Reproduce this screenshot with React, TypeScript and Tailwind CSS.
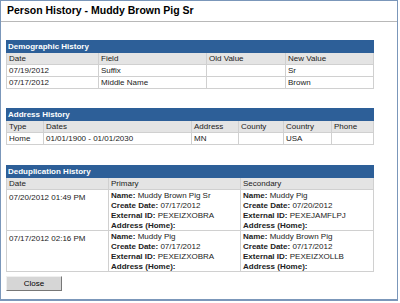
import React from 'react'

const cell = 'border border-[#d0d0d0] px-[2px] h-[12px] align-top leading-[11px]'
const head = 'border border-[#d0d0d0] px-[2px] h-[12px] bg-[#e4e4e4] text-left font-normal leading-[11px]'

function Section({ title, cols, children }: { title: string; cols: { label: string; w: number }[]; children: React.ReactNode }) {
  return (
    <table className="w-[367px] border-collapse table-fixed">
      <colgroup>
        {cols.map((c) => (
          <col key={c.label} style={{ width: c.w }} />
        ))}
      </colgroup>
      <thead>
        <tr>
          <th colSpan={cols.length} className="bg-[#2d5f98] text-white font-bold text-left px-[1px] h-[11px] leading-[11px] border border-[#2d5f98]">
            {title}
          </th>
        </tr>
        <tr>
          {cols.map((c) => (
            <th key={c.label} className={head}>
              {c.label}
            </th>
          ))}
        </tr>
      </thead>
      <tbody>{children}</tbody>
    </table>
  )
}

function Person({ name, created, ext }: { name: string; created: string; ext: string }) {
  return (
    <div className="leading-[10px] pt-[1px]">
      <div>
        <b>Name:</b> {name}
      </div>
      <div>
        <b>Create Date:</b> {created}
      </div>
      <div>
        <b>External ID:</b> {ext}
      </div>
      <div className="h-[9px]">
        <b>Address (Home):</b>
      </div>
    </div>
  )
}

export default function App() {
  return (
    <div className="w-[400px] h-[303px] bg-white text-[#222] text-[8px]" style={{ fontFamily: '"Liberation Sans", Arial, sans-serif' }}>
      <div className="w-[398px] h-[301px] border border-[#7b97ba] border-b-2 flex flex-col">
        <div className="h-[21px] border-b border-[#b8b8b8] px-[6px] flex items-center text-[10.5px] font-bold text-black">
          Person History - Muddy Brown Pig Sr
        </div>
        <div className="px-[5px] pt-[18px] flex flex-col">
          <Section
            title="Demographic History"
            cols={[
              { label: 'Date', w: 92 },
              { label: 'Field', w: 108 },
              { label: 'Old Value', w: 79 },
              { label: 'New Value', w: 88 },
            ]}
          >
            <tr>
              <td className={cell}>07/19/2012</td>
              <td className={cell}>Suffix</td>
              <td className={cell}></td>
              <td className={cell}>Sr</td>
            </tr>
            <tr>
              <td className={cell}>07/17/2012</td>
              <td className={cell}>Middle Name</td>
              <td className={cell}></td>
              <td className={cell}>Brown</td>
            </tr>
          </Section>
          <div className="h-[19px]" />
          <Section
            title="Address History"
            cols={[
              { label: 'Type', w: 37 },
              { label: 'Dates', w: 148 },
              { label: 'Address', w: 47 },
              { label: 'County', w: 45 },
              { label: 'Country', w: 48 },
              { label: 'Phone', w: 42 },
            ]}
          >
            <tr>
              <td className={cell}>Home</td>
              <td className={cell}>01/01/1900 - 01/01/2030</td>
              <td className={cell}>MN</td>
              <td className={cell}></td>
              <td className={cell}>USA</td>
              <td className={cell}></td>
            </tr>
          </Section>
          <div className="h-[20px]" />
          <Section
            title="Deduplication History"
            cols={[
              { label: 'Date', w: 102 },
              { label: 'Primary', w: 132 },
              { label: 'Secondary', w: 133 },
            ]}
          >
            <tr>
              <td className={cell + ' pt-[2px]'}>07/20/2012 01:49 PM</td>
              <td className={cell}>
                <Person name="Muddy Brown Pig Sr" created="07/17/2012" ext="PEXEIZXOBRA" />
              </td>
              <td className={cell}>
                <Person name="Muddy Pig" created="07/20/2012" ext="PEXEJAMFLPJ" />
              </td>
            </tr>
            <tr>
              <td className={cell + ' pt-[2px]'}>07/17/2012 02:16 PM</td>
              <td className={cell}>
                <Person name="Muddy Pig" created="07/17/2012" ext="PEXEIZXOBRA" />
              </td>
              <td className={cell}>
                <Person name="Muddy Brown Pig" created="07/17/2012" ext="PEXEIZXOLLB" />
              </td>
            </tr>
          </Section>
          <div className="pt-[4px]">
            <button className="w-[56px] h-[15px] bg-[#d6d6d6] border border-t-[#f0f0f0] border-l-[#f0f0f0] border-r-[#777] border-b-[#777] text-[8px] text-black leading-[12px]">
              Close
            </button>
          </div>
        </div>
      </div>
    </div>
  )
}
